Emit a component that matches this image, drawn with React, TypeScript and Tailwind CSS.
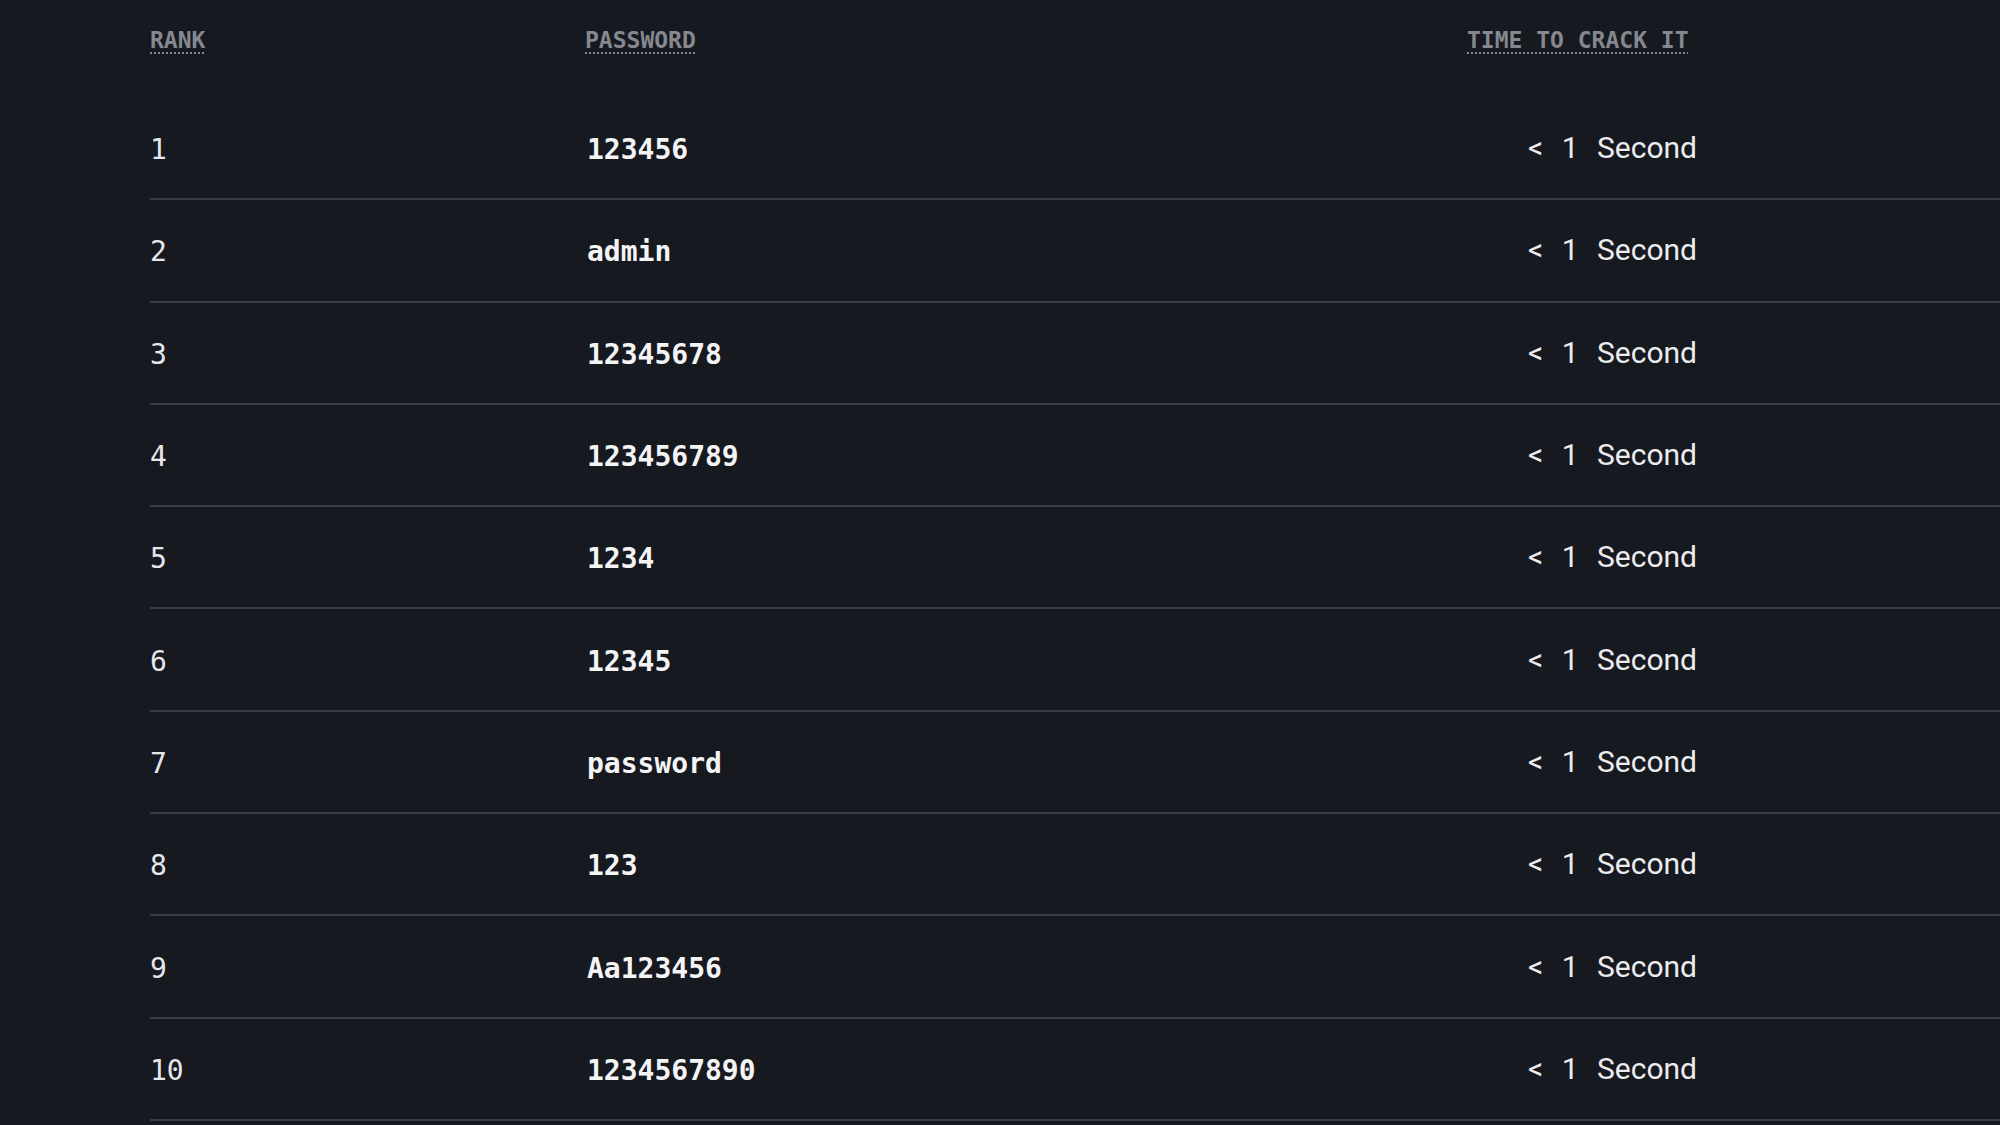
import React from 'react';

const rows = [
  '123456',
  'admin',
  '12345678',
  '123456789',
  '1234',
  '12345',
  'password',
  '123',
  'Aa123456',
  '1234567890',
];

const mono = { fontFamily: '"DejaVu Sans Mono", "Liberation Mono", monospace' };

export default function App() {
  return (
    <main className="min-h-screen w-full overflow-hidden bg-[#171921] pl-[150px]">
      {/* header */}
      <div
        className="grid h-[98px] grid-cols-[435px_882px_1fr] pt-[29px] text-[23px] font-bold leading-none text-[#85888f] uppercase"
        style={mono}
      >
        <span>
          <abbr className="underline decoration-dotted decoration-2 underline-offset-[4px]" title="Rank">
            Rank
          </abbr>
        </span>
        <span>
          <abbr className="underline decoration-dotted decoration-2 underline-offset-[4px]" title="Password">
            Password
          </abbr>
        </span>
        <span>
          <abbr className="underline decoration-dotted decoration-2 underline-offset-[4px]" title="Time to crack it">
            Time to crack it
          </abbr>
        </span>
      </div>

      {rows.map((pw, i) => (
        <div
          key={pw}
          className="grid h-[102.3px] grid-cols-[437px_880px_1fr] items-center border-b-2 border-[#393c44] pt-1"
        >
          <span className="text-[28px] font-medium text-[#e6e7ea]" style={mono}>
            {i + 1}
          </span>
          <span className="text-[28px] font-bold text-[#f4f4f5]" style={mono}>
            {pw}
          </span>
          <span
            className="pb-[5px] pl-[61px] text-[30px] text-[#ececee] [word-spacing:11px]"
            style={{ fontFamily: 'Roboto, "Noto Sans", sans-serif' }}
          >
            &lt; 1 Second
          </span>
        </div>
      ))}
    </main>
  );
}
